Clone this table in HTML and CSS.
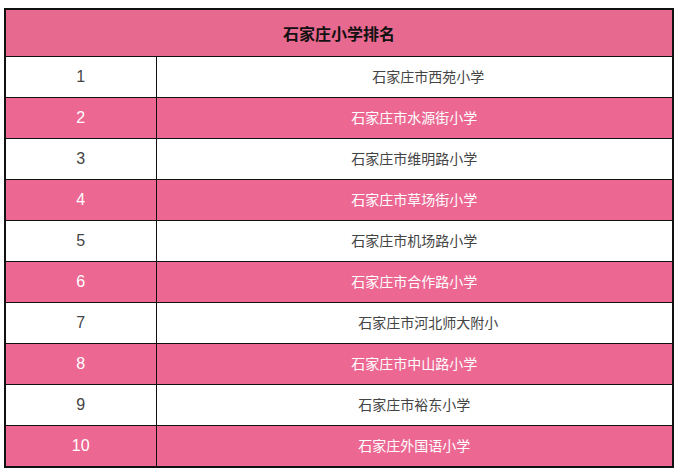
FILE: index.html
```html
<!DOCTYPE html>
<html lang="zh">
<head>
<meta charset="utf-8">
<link rel="stylesheet" href="styles.css">
</head>
<body>
<table class="rank">
  <colgroup>
    <col class="col-num">
    <col class="col-name">
  </colgroup>
  <thead>
    <tr><th colspan="2" class="title">石家庄小学排名</th></tr>
  </thead>
  <tbody>
    <tr class="light"><td class="num">1</td><td class="name shift">石家庄市西苑小学</td></tr>
    <tr class="pink"><td class="num">2</td><td class="name">石家庄市水源街小学</td></tr>
    <tr class="light"><td class="num">3</td><td class="name">石家庄市维明路小学</td></tr>
    <tr class="pink"><td class="num">4</td><td class="name">石家庄市草场街小学</td></tr>
    <tr class="light"><td class="num">5</td><td class="name">石家庄市机场路小学</td></tr>
    <tr class="pink"><td class="num">6</td><td class="name">石家庄市合作路小学</td></tr>
    <tr class="light"><td class="num">7</td><td class="name shift">石家庄市河北师大附小</td></tr>
    <tr class="pink"><td class="num">8</td><td class="name">石家庄市中山路小学</td></tr>
    <tr class="light"><td class="num">9</td><td class="name">石家庄市裕东小学</td></tr>
    <tr class="pink"><td class="num">10</td><td class="name">石家庄外国语小学</td></tr>
  </tbody>
</table>
</body>
</html>
```
FILE: styles.css
```css
html, body {
  margin: 0;
  padding: 0;
  background: #ffffff;
}
body {
  padding: 8px 0 0 4px;
  font-family: "Liberation Sans", Arial, "Noto Sans CJK SC", sans-serif;
}
.rank {
  border-collapse: collapse;
  width: 670px;
  table-layout: fixed;
  border: 2px solid #111;
}
.col-num {
  width: 151px;
}
.rank th, .rank td {
  border: 1.5px solid #111;
  padding: 0;
  text-align: center;
  vertical-align: middle;
}
.title {
  height: 46px;
  background: #e8698f;
  color: #111;
  font-size: 16px;
  font-weight: bold;
}
.rank td {
  height: 40px;
  font-size: 14px;
}
.rank .num {
  font-family: "Liberation Sans", Arial, sans-serif;
  font-size: 16px;
}
.light td {
  background: #ffffff;
  color: #444;
}
.pink td {
  background: #ec6893;
  color: #fff;
}
.rank .name {
  font-family: "Noto Sans CJK SC", sans-serif;
  height: 37px;
  padding-bottom: 3px;
}
.rank .shift {
  padding-left: 28px;
}
```
